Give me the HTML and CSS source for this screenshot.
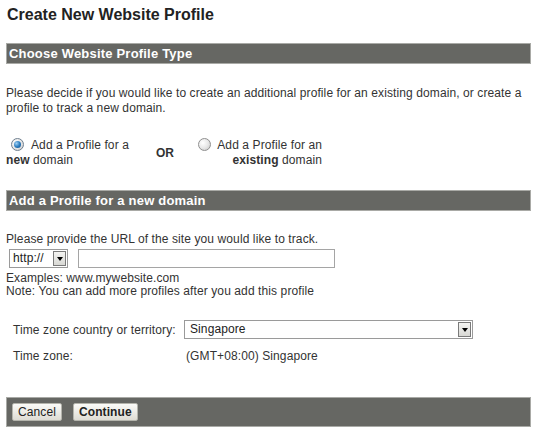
FILE: index.html
```html
<!DOCTYPE html>
<html>
<head>
<meta charset="utf-8">
<link rel="stylesheet" href="styles.css">
</head>
<body>
<div class="page">
  <h1 class="title">Create New Website Profile</h1>

  <div class="bar">Choose Website Profile Type</div>
  <p class="intro">Please decide if you would like to create an additional profile for an existing domain, or create a<br>profile to track a new domain.</p>

  <div class="choice">
    <div class="opt opt-left">
      <span class="radio checked"></span>Add a Profile for a<br><b>new</b> domain
    </div>
    <div class="or">OR</div>
    <div class="opt opt-right">
      <span class="radio"></span>Add a Profile for an<br><b>existing</b> domain
    </div>
  </div>

  <div class="bar bar2">Add a Profile for a new domain</div>
  <div class="url-label">Please provide the URL of the site you would like to track.</div>
  <div class="url-row">
    <div class="select proto"><span class="sel-text">http://</span><span class="sel-btn"><span class="tri"></span></span></div>
    <div class="textbox"></div>
  </div>
  <div class="hint">Examples: www.mywebsite.com<br>Note: You can add more profiles after you add this profile</div>

  <div class="tz">
    <div class="tz-label">Time zone country or territory:</div>
    <div class="select country"><span class="sel-text">Singapore</span><span class="sel-btn"><span class="tri"></span></span></div>
    <div class="tz-label tz2">Time zone:</div>
    <div class="tz-value tz2">(GMT+08:00) Singapore</div>
  </div>

  <div class="footer">
    <button class="btn">Cancel</button>
    <button class="btn btn-primary">Continue</button>
  </div>
</div>
</body>
</html>
```

FILE: styles.css
```css
html, body {
  margin: 0;
  padding: 0;
  background: #ffffff;
}
.page {
  padding: 0 2px 0 6px;
  font-family: "Liberation Sans", Arial, sans-serif;
  font-size: 12px;
  letter-spacing: 0.1px;
  color: #333333;
}
.title {
  margin: 0;
  padding-top: 5px;
  font-size: 16px;
  line-height: 20px;
  font-weight: bold;
  letter-spacing: 0;
  color: #222222;
  padding-left: 1px;
}
.bar {
  margin-top: 18px;
  height: 19px;
  line-height: 19px;
  border: 1px solid #a9aaa6;
  background: #666763;
  color: #ffffff;
  font-weight: bold;
  font-size: 13px;
  letter-spacing: 0.2px;
  padding-left: 2px;
}
.bar2 {
  margin-top: 22px;
}
.intro {
  margin: 22px 0 0;
  line-height: 15px;
}
.choice {
  margin-top: 22px;
  display: flex;
  align-items: center;
  line-height: 15px;
}
.opt-left {
  width: 126px;
}
.or {
  width: 66px;
  text-align: center;
  font-weight: bold;
  padding-top: 1px;
}
.opt-right {
  text-align: right;
  width: 124px;
}
.radio {
  display: inline-block;
  width: 11px;
  height: 11px;
  border-radius: 50%;
  border: 1px solid #8f8f8f;
  background: radial-gradient(circle at 35% 35%, #ffffff 0%, #e8e8e8 50%, #c4c4c4 100%);
  vertical-align: -2px;
  position: relative;
  box-sizing: content-box;
}
.opt-left .radio {
  margin: 0 7px 0 5px;
}
.opt-right .radio {
  margin-right: 6px;
}
.radio.checked {
  border-color: #6f7f8f;
}
.radio.checked::after {
  content: "";
  position: absolute;
  left: 2px;
  top: 2px;
  width: 7px;
  height: 7px;
  border-radius: 50%;
  background: radial-gradient(circle at 35% 35%, #9fd0f4 0%, #2f7fc0 50%, #0e4a86 100%);
}
.url-label {
  margin-top: 21px;
  line-height: 14px;
}
.url-row {
  margin-top: 3px;
  display: flex;
  gap: 10px;
  padding-left: 3px;
}
.select {
  box-sizing: border-box;
  height: 19px;
  border: 1px solid #9a9a9a;
  background: #ffffff;
  display: flex;
  align-items: stretch;
  color: #222222;
}
.sel-text {
  flex: 1;
  line-height: 17px;
  padding-left: 3px;
}
.sel-btn {
  width: 13px;
  margin: 1px;
  box-sizing: border-box;
  border: 1px solid #7a7a7a;
  background: linear-gradient(#f4f4f2, #d8d8d4);
  display: flex;
  align-items: center;
  justify-content: center;
}
.tri {
  width: 0;
  height: 0;
  border-left: 3px solid transparent;
  border-right: 3px solid transparent;
  border-top: 4px solid #000000;
}
.proto {
  width: 59px;
}
.textbox {
  box-sizing: border-box;
  width: 257px;
  height: 19px;
  border: 1px solid #a5a5a5;
  background: #ffffff;
}
.hint {
  margin-top: 4px;
  line-height: 13px;
}
.tz {
  margin-top: 22px;
  display: grid;
  grid-template-columns: 178px 289px;
  align-items: center;
  row-gap: 10px;
}
.tz-label {
  padding-left: 7px;
}
.country {
  width: 289px;
}
.country .sel-text {
  padding-left: 5px;
}
.tz-value {
  padding-left: 2px;
  line-height: 14px;
}
.footer {
  margin-top: 34px;
  border: 1px solid #a9aaa6;
  background: #666763;
  display: flex;
  align-items: flex-start;
  gap: 11px;
  padding: 5px 0 0 5px;
  box-sizing: border-box;
  height: 30px;
}
.btn {
  height: 18px;
  margin: 0;
  padding: 0 5px;
  font-family: "Liberation Sans", Arial, sans-serif;
  font-size: 12px;
  letter-spacing: 0.1px;
  line-height: 16px;
  color: #222222;
  border: 1px solid #b4b4ac;
  border-radius: 2px;
  background: linear-gradient(#fbfbf8, #dedcd4);
}
.btn-primary {
  font-weight: bold;
}
```
